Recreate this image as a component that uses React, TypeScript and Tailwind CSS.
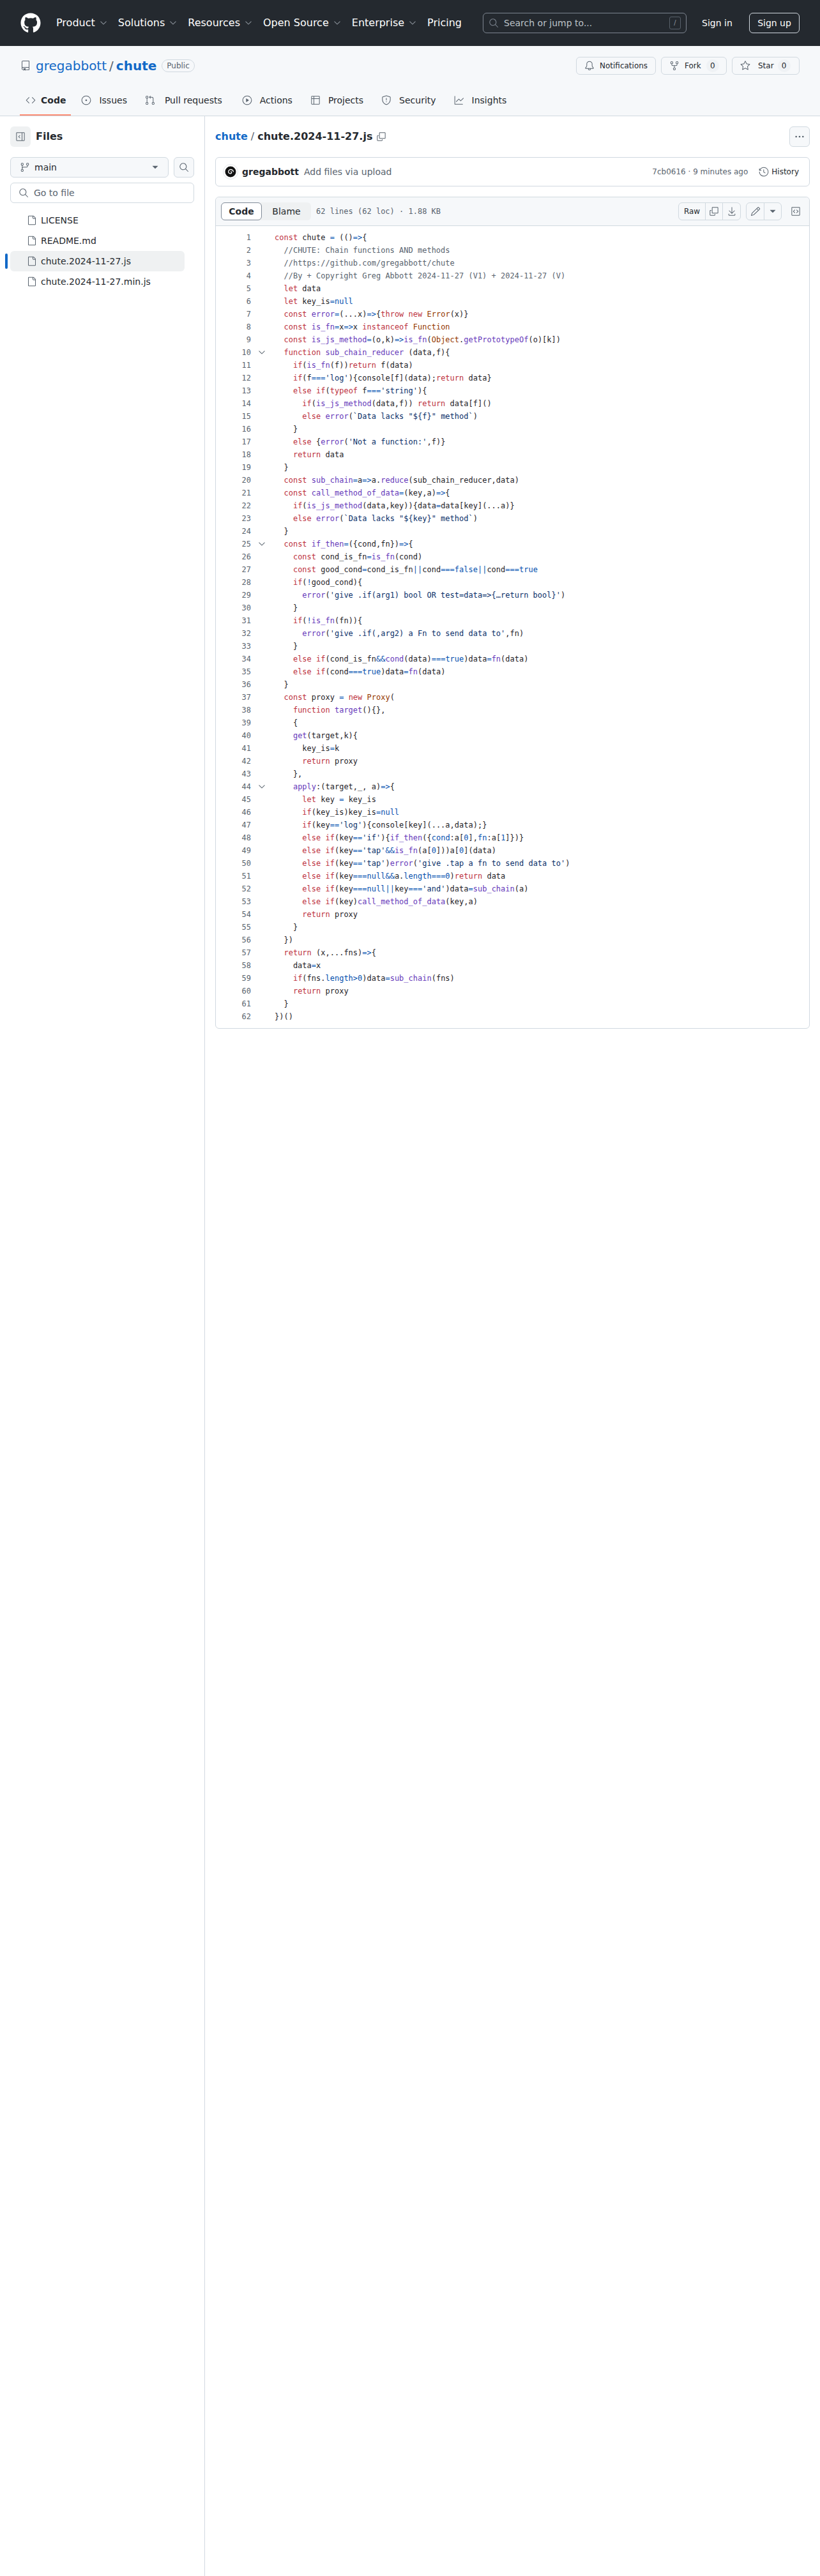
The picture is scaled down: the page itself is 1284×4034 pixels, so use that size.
import { FaGithub } from "react-icons/fa";
import {
  GoBell,
  GoChevronDown,
  GoCode,
  GoCodeSquare,
  GoCopy,
  GoDownload,
  GoFile,
  GoGitBranch,
  GoGitPullRequest,
  GoGraph,
  GoHistory,
  GoIssueOpened,
  GoKebabHorizontal,
  GoPencil,
  GoPlay,
  GoRepo,
  GoRepoForked,
  GoSearch,
  GoShield,
  GoSidebarExpand,
  GoStar,
  GoTable,
  GoTriangleDown,
} from "react-icons/go";

const tokenColors: Record<string, string> = {
  k: "text-[#bd3240]",
  f: "text-[#6639ba]",
  c: "text-[#0550ae]",
  s: "text-[#0a3069]",
  m: "text-[#59636e]",
  b: "text-[#953800]",
};

const code = [
  "‹k:const› chute ‹c:=› (()‹c:=>›{",
  "  ‹m://CHUTE: Chain functions AND methods›",
  "  ‹m://https://github.com/gregabbott/chute›",
  "  ‹m://By + Copyright Greg Abbott 2024-11-27 (V1) + 2024-11-27 (V)›",
  "  ‹k:let› data",
  "  ‹k:let› key_is‹c:=null›",
  "  ‹k:const› ‹f:error›‹c:=›(...x)‹c:=>›{‹k:throw› ‹k:new› ‹b:Error›(x)}",
  "  ‹k:const› ‹f:is_fn›‹c:=›x‹c:=>›x ‹k:instanceof› ‹b:Function›",
  "  ‹k:const› ‹f:is_js_method›‹c:=›(o,k)‹c:=>›‹f:is_fn›(‹b:Object›.‹f:getPrototypeOf›(o)[k])",
  "  ‹k:function› ‹f:sub_chain_reducer› (data,f){",
  "    ‹k:if›(‹f:is_fn›(f))‹k:return› f(data)",
  "    ‹k:if›(f‹c:===›‹s:'log'›){console[f](data);‹k:return› data}",
  "    ‹k:else› ‹k:if›(‹k:typeof› f‹c:===›‹s:'string'›){",
  "      ‹k:if›(‹f:is_js_method›(data,f)) ‹k:return› data[f]()",
  "      ‹k:else› ‹f:error›(‹s:`Data lacks \"${f}\" method`›)",
  "    }",
  "    ‹k:else› {‹f:error›(‹s:'Not a function:'›,f)}",
  "    ‹k:return› data",
  "  }",
  "  ‹k:const› ‹f:sub_chain›‹c:=›a‹c:=>›a.‹f:reduce›(sub_chain_reducer,data)",
  "  ‹k:const› ‹f:call_method_of_data›‹c:=›(key,a)‹c:=>›{",
  "    ‹k:if›(‹f:is_js_method›(data,key)){data‹c:=›data[key](...a)}",
  "    ‹k:else› ‹f:error›(‹s:`Data lacks \"${key}\" method`›)",
  "  }",
  "  ‹k:const› ‹f:if_then›‹c:=›({cond,fn})‹c:=>›{",
  "    ‹k:const› cond_is_fn‹c:=›‹f:is_fn›(cond)",
  "    ‹k:const› good_cond‹c:=›cond_is_fn‹c:||›cond‹c:===false||›cond‹c:===true›",
  "    ‹k:if›(‹c:!›good_cond){",
  "      ‹f:error›(‹s:'give .if(arg1) bool OR test=data=>{…return bool}'›)",
  "    }",
  "    ‹k:if›(‹c:!›‹f:is_fn›(fn)){",
  "      ‹f:error›(‹s:'give .if(,arg2) a Fn to send data to'›,fn)",
  "    }",
  "    ‹k:else› ‹k:if›(cond_is_fn‹c:&&›‹f:cond›(data)‹c:===true›)data‹c:=›‹f:fn›(data)",
  "    ‹k:else› ‹k:if›(cond‹c:===true›)data‹c:=›‹f:fn›(data)",
  "  }",
  "  ‹k:const› proxy ‹c:=› ‹k:new› ‹b:Proxy›(",
  "    ‹k:function› ‹f:target›(){},",
  "    {",
  "    ‹f:get›(target,k){",
  "      key_is‹c:=›k",
  "      ‹k:return› proxy",
  "    },",
  "    ‹f:apply›:(target,_, a)‹c:=>›{",
  "      ‹k:let› key ‹c:=› key_is",
  "      ‹k:if›(key_is)key_is‹c:=null›",
  "      ‹k:if›(key‹c:==›‹s:'log'›){console[key](...a,data);}",
  "      ‹k:else› ‹k:if›(key‹c:==›‹s:'if'›){‹f:if_then›({‹c:cond›:a[‹c:0›],‹c:fn›:a[‹c:1›]})}",
  "      ‹k:else› ‹k:if›(key‹c:==›‹s:'tap'›‹c:&&›‹f:is_fn›(a[‹c:0›]))a[‹c:0›](data)",
  "      ‹k:else› ‹k:if›(key‹c:==›‹s:'tap'›)‹f:error›(‹s:'give .tap a fn to send data to'›)",
  "      ‹k:else› ‹k:if›(key‹c:===null&&›a.‹c:length===0›)‹k:return› data",
  "      ‹k:else› ‹k:if›(key‹c:===null||›key‹c:===›‹s:'and'›)data‹c:=›‹f:sub_chain›(a)",
  "      ‹k:else› ‹k:if›(key)‹f:call_method_of_data›(key,a)",
  "      ‹k:return› proxy",
  "    }",
  "  })",
  "  ‹k:return› (x,...fns)‹c:=>›{",
  "    data‹c:=›x",
  "    ‹k:if›(fns.‹c:length›‹c:>0›)data‹c:=›‹f:sub_chain›(fns)",
  "    ‹k:return› proxy",
  "  }",
  "})()",
];

const foldable = [10, 25, 44];

// splits "‹k:const› x" into coloured spans
const CodeText = ({ line }: { line: string }) => {
  const parts = line.split(/‹([a-z]):([^›]*)›/);
  return (
    <>
      {parts.map((part, i) => {
        if (i % 3 === 0) return <span key={i}>{part}</span>;
        if (i % 3 === 1) return null;
        return (
          <span key={i} className={tokenColors[parts[i - 1]]}>
            {part}
          </span>
        );
      })}
    </>
  );
};

const navItems = ["Product", "Solutions", "Resources", "Open Source", "Enterprise"];

const tabs = [
  { label: "Issues", Icon: GoIssueOpened, cls: "ml-2 mr-5 flex items-center gap-3" },
  { label: "Pull requests", Icon: GoGitPullRequest, cls: "ml-2 mr-[23px] flex items-center gap-[15px]" },
  { label: "Actions", Icon: GoPlay, cls: "ml-2 mr-5 flex items-center gap-3" },
  { label: "Projects", Icon: GoTable, cls: "ml-2 mr-5 flex items-center gap-3" },
  { label: "Security", Icon: GoShield, cls: "ml-2 mr-5 flex items-center gap-3" },
  { label: "Insights", Icon: GoGraph, cls: "ml-2 mr-5 flex items-center gap-3" },
];

const files = ["LICENSE", "README.md", "chute.2024-11-27.js", "chute.2024-11-27.min.js"];

const Header = () => {
  return (
    <header className="flex h-[72px] items-center whitespace-nowrap bg-[#24292f] pl-8 pr-8 text-white">
      <FaGithub size={32} className="shrink-0" />
      <nav className="ml-6 flex shrink-0 items-center gap-[15px] text-base">
        {navItems.map((item) => (
          <div key={item} className="flex items-center gap-[5px]">
            <span>{item}</span>
            <GoChevronDown size={16} className="text-[#9198a1]" />
          </div>
        ))}
        <span>Pricing</span>
      </nav>
      {/* search */}
      <div className="ml-[33px] flex h-8 w-[319px] shrink-0 items-center rounded-md border border-[#7d8590] pl-2 pr-2 text-sm text-[#bcc2c8]">
        <GoSearch size={16} className="mr-2 text-[#7d8590]" />
        <span>Search or jump to...</span>
        <span className="ml-auto flex h-[20px] w-[18px] items-center justify-center rounded-[3px] border border-[#57606a] text-[10px] text-[#9198a1]">
          /
        </span>
      </div>
      <span className="ml-6 text-sm">Sign in</span>
      <span className="ml-auto flex h-8 w-[79px] shrink-0 items-center justify-center rounded-md border border-[#d0d7de] text-sm">
        Sign up
      </span>
    </header>
  );
};

const RepoHead = () => {
  return (
    <section className="border-b border-[#d1d9e0] bg-[#f6f8fa]">
      <div className="flex h-[60px] items-center pl-8 pr-8 pt-[1px]">
        <GoRepo size={16} className="mr-2 text-[#59636e]" />
        <span className="text-xl text-[#1269c7]">gregabbott</span>
        <span className="mx-[4px] text-xl text-[#59636e]">/</span>
        <span className="text-xl font-bold text-[#1269c7]">chute</span>
        <span className="ml-2 rounded-full border border-[#d1d9e0] px-[7px] text-xs leading-[18px] text-[#59636e]">
          Public
        </span>
        <div className="ml-auto flex items-center gap-2 text-xs text-[#25292e]">
          <div className="flex h-7 w-[125px] items-center gap-2 rounded-md border border-[#d1d9e0] pl-3">
            <GoBell size={16} className="text-[#59636e]" />
            Notifications
          </div>
          <div className="flex h-7 w-[103px] items-center gap-2 rounded-md border border-[#d1d9e0] pl-3">
            <GoRepoForked size={16} className="text-[#59636e]" />
            Fork
            <span className="flex h-5 w-5 items-center justify-center rounded-full bg-[#eff2f5]">0</span>
          </div>
          <div className="flex h-7 w-[106px] items-center gap-[6px] rounded-md border border-[#d1d9e0] pl-3">
            <GoStar size={16} className="mr-[6px] text-[#59636e]" />
            Star
            <span className="flex h-5 w-5 items-center justify-center rounded-full bg-[#eff2f5]">0</span>
          </div>
        </div>
      </div>
      <div className="flex h-[49px] pl-[31px] text-sm text-[#25292e]">
        <div className="mr-2 flex items-center gap-2 border-b-2 border-[#fd8c73] pl-[9px] pr-2 pt-[2px] font-bold">
          <GoCode size={16} className="text-[#59636e]" />
          Code
        </div>
        {tabs.map(({ label, Icon, cls }) => (
          <div key={label} className={cls}>
            <Icon size={16} className="text-[#59636e]" />
            {label}
          </div>
        ))}
      </div>
    </section>
  );
};

const Sidebar = () => {
  return (
    <aside className="w-[321px] shrink-0 border-r border-[#d1d9e0] pt-4 text-sm text-[#25292e]">
      <div className="flex items-center pl-4">
        <div className="flex h-8 w-8 items-center justify-center rounded-md bg-[#eff1f2] text-[#59636e]">
          <GoSidebarExpand size={16} />
        </div>
        <span className="ml-2 text-base font-bold">Files</span>
      </div>
      <div className="mt-4 flex gap-2 pl-4 pr-4">
        <div className="flex h-8 w-[248px] items-center rounded-md border border-[#d1d9e0] bg-[#f6f8fa] pl-[14px] pr-3">
          <GoGitBranch size={16} className="text-[#59636e]" />
          <span className="ml-[7px]">main</span>
          <GoTriangleDown size={16} className="ml-auto text-[#59636e]" />
        </div>
        <div className="flex h-8 w-8 items-center justify-center rounded-md border border-[#d1d9e0] bg-[#f6f8fa] text-[#59636e]">
          <GoSearch size={16} />
        </div>
      </div>
      <div className="ml-4 mr-4 mt-2 flex h-8 items-center rounded-md border border-[#d1d9e0] pl-3 text-[#59636e]">
        <GoSearch size={16} />
        <span className="ml-2">Go to file</span>
      </div>
      <ul className="mt-[11px]">
        {files.map((file, i) => (
          <li
            key={file}
            className={
              i === 2
                ? "relative ml-4 flex h-8 w-[273px] items-center rounded-md bg-[#eff1f2] pl-[26px]"
                : "ml-4 flex h-8 w-[273px] items-center rounded-md pl-[26px]"
            }
          >
            {i === 2 && (
              <span className="absolute -left-2 top-1 h-6 w-1 rounded-md bg-[#1269c7]"></span>
            )}
            <GoFile size={16} className="text-[#59636e]" />
            <span className="ml-[6px]">{file}</span>
          </li>
        ))}
      </ul>
    </aside>
  );
};

const Avatar = () => {
  return (
    <svg width="24" height="24" viewBox="0 0 24 24" className="shrink-0">
      <circle cx="12" cy="12" r="11.5" fill="#fff" stroke="#e3e7eb" />
      <circle cx="12" cy="12" r="8.5" fill="#111" />
      <path
        d="M12 12.2c.8-.8 2 .1 1.6 1.3-.5 1.5-3 1.8-4.2.4-1.4-1.7-.6-4.5 1.7-5.2 2.5-.8 5.2.8 5.4 3.5"
        fill="none"
        stroke="#fff"
        strokeWidth="1.3"
      />
    </svg>
  );
};

const FileView = () => {
  return (
    <main className="min-w-0 flex-1 pl-4 pr-4 pt-4 text-[#25292e]">
      {/* breadcrumb */}
      <div className="flex h-8 items-center text-base font-bold">
        <span className="text-[#1269c7]">chute</span>
        <span className="mx-[5px] font-normal text-[#59636e]">/</span>
        <span>chute.2024-11-27.js</span>
        <GoCopy size={16} className="ml-[6px] text-[#59636e]" />
        <div className="ml-auto flex h-8 w-8 items-center justify-center rounded-md border border-[#d1d9e0] bg-[#f6f8fa] text-[#59636e]">
          <GoKebabHorizontal size={16} />
        </div>
      </div>
      {/* latest commit */}
      <div className="mt-4 flex h-[46px] items-center rounded-md border border-[#d1d9e0] pl-[11px] pr-4 text-sm">
        <Avatar />
        <span className="ml-[6px] font-bold">gregabbott</span>
        <span className="ml-2 text-[#59636e]">Add files via upload</span>
        <span className="ml-auto text-xs text-[#59636e]">7cb0616 · 9 minutes ago</span>
        <GoHistory size={16} className="ml-[17px] text-[#59636e]" />
        <span className="ml-1 text-xs">History</span>
      </div>
      {/* code box */}
      <div className="mt-4 rounded-md border border-[#d1d9e0]">
        <div className="flex h-[45px] items-center rounded-t-md border-b border-[#d1d9e0] bg-[#f6f8fa] pl-2 pr-[13px]">
          <div className="flex h-7 rounded-md bg-[#eff1f2] text-sm">
            <span className="flex w-16 items-center justify-center rounded-md border border-[#818b98] bg-white font-bold">
              Code
            </span>
            <span className="flex w-[77px] items-center justify-center">Blame</span>
          </div>
          <span className="ml-2 font-['DejaVu_Sans_Mono',monospace] text-xs text-[#59636e]">
            62 lines (62 loc) · 1.88 KB
          </span>
          <div className="ml-auto flex h-7 rounded-md border border-[#d1d9e0] bg-[#f6f8fa] text-xs">
            <span className="flex w-[42px] items-center justify-center border-r border-[#d1d9e0]">Raw</span>
            <span className="flex w-[27px] items-center justify-center border-r border-[#d1d9e0] text-[#59636e]">
              <GoCopy size={16} />
            </span>
            <span className="flex w-[27px] items-center justify-center text-[#59636e]">
              <GoDownload size={16} />
            </span>
          </div>
          <div className="ml-2 flex h-7 rounded-md border border-[#d1d9e0] bg-[#f6f8fa] text-[#59636e]">
            <span className="flex w-[28px] items-center justify-center border-r border-[#d1d9e0]">
              <GoPencil size={16} />
            </span>
            <span className="flex w-[26px] items-center justify-center">
              <GoTriangleDown size={16} />
            </span>
          </div>
          <GoCodeSquare size={16} className="ml-[14px] text-[#59636e]" />
        </div>
        <div className="py-2 font-['DejaVu_Sans_Mono',monospace] text-xs leading-5 text-[#1f2328]">
          {code.map((line, i) => (
            <div key={i} className="flex h-5">
              <span className="w-[55px] shrink-0 text-right text-[#59636e]">{i + 1}</span>
              <span className="flex w-[37px] shrink-0 items-center pl-[9px] text-[#59636e]">
                {foldable.includes(i + 1) && <GoChevronDown size={16} />}
              </span>
              <span className="whitespace-pre">
                <CodeText line={line} />
              </span>
            </div>
          ))}
        </div>
      </div>
    </main>
  );
};

const App = () => {
  return (
    <div className="flex min-h-[4034px] flex-col bg-white font-['DejaVu_Sans',sans-serif]">
      <Header />
      <RepoHead />
      <div className="flex flex-1">
        <Sidebar />
        <FileView />
      </div>
    </div>
  );
};

export default App;
